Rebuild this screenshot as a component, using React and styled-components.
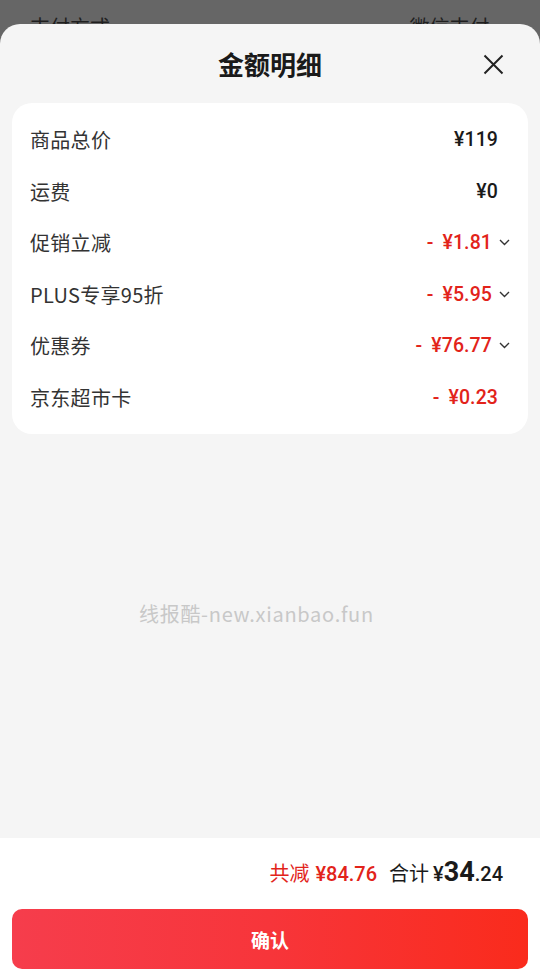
import React from 'react';
import styled, { createGlobalStyle } from 'styled-components';

const GlobalStyle = createGlobalStyle`
  html, body {
    margin: 0;
    padding: 0;
    background: #666666;
  }
  body {
    font-family: "Noto Sans CJK SC", "Noto Sans", sans-serif;
  }
  * { box-sizing: border-box; }
`;

const Page = styled.div`
  width: 540px;
  height: 980px;
  display: flex;
  flex-direction: column;
  background: #666666;
  overflow: hidden;
`;

const Backdrop = styled.div`
  height: 24px;
  overflow: hidden;
  display: flex;
  justify-content: space-between;
  padding: 15px 40px 0 30px;
  font-size: 20px;
  line-height: 24px;
  color: #1f1f1f;
`;

const Sheet = styled.div`
  flex: 1;
  display: flex;
  flex-direction: column;
  background: #f5f5f5;
  border-radius: 20px 20px 0 0;
  overflow: hidden;
`;

const Header = styled.div`
  position: relative;
  height: 79px;
  display: flex;
  align-items: center;
  justify-content: center;
`;

const Title = styled.h1`
  margin: 0;
  font-size: 26px;
  font-weight: 700;
  color: #1a1a1a;
  line-height: 1;
`;

const CloseButton = styled.button`
  position: absolute;
  right: 36px;
  top: 29px;
  width: 22px;
  height: 22px;
  padding: 0;
  border: none;
  background: transparent;
  display: flex;
  align-items: center;
  justify-content: center;
  cursor: pointer;
`;

const Card = styled.div`
  margin: 0 12px;
  padding: 11px 18px 11px;
  background: #ffffff;
  border-radius: 20px;
`;

const Row = styled.div`
  height: 51.5px;
  display: flex;
  align-items: center;
  justify-content: space-between;
`;

const Label = styled.span`
  font-size: 20px;
  color: #333333;
  letter-spacing: 0.3px;
`;

const Right = styled.div`
  display: flex;
  align-items: center;
`;

const Value = styled.span`
  font-family: Roboto, "Noto Sans CJK SC", sans-serif;
  font-size: 19.5px;
  font-weight: 500;
  color: ${p => (p.$red ? '#e2231a' : '#1a1a1a')};
  letter-spacing: 0.1px;
`;

const Minus = styled.span`
  margin-right: 9px;
`;

const Trail = styled.span`
  width: 12px;
  margin-left: ${p => (p.$icon ? '6px' : '0')};
  display: flex;
  align-items: center;
  justify-content: flex-end;
`;

const Filler = styled.div`
  flex: 1;
  padding: 168px 0 0 139px;
`;

const Watermark = styled.span`
  font-size: 20px;
  line-height: 24px;
  letter-spacing: 0.7px;
  color: #c8c8c8;
`;

const Footer = styled.div`
  background: #ffffff;
  display: flex;
  flex-direction: column;
`;

const Summary = styled.div`
  height: 65px;
  display: flex;
  align-items: center;
  justify-content: flex-end;
  padding: 3px 37px 0 0;
  gap: 12px;
`;

const Saved = styled.span`
  font-size: 20px;
  color: #e2231a;
  display: flex;
  align-items: baseline;
`;

const Total = styled.span`
  font-size: 20px;
  color: #1a1a1a;
  display: flex;
  align-items: baseline;
`;

const Num = styled.span`
  font-family: Roboto, "Noto Sans CJK SC", sans-serif;
  font-weight: ${p => (p.$bold ? 700 : 500)};
  font-size: ${p => p.$size || 20}px;
  margin-left: ${p => p.$gap || 0}px;
`;

const ConfirmButton = styled.button`
  margin: 6px 12px 11px;
  height: 60px;
  border: none;
  border-radius: 10px;
  background: linear-gradient(90deg, #f63d4c 0%, #f7353a 50%, #fa2b1c 100%);
  color: #ffffff;
  font-family: "Noto Sans CJK SC", sans-serif;
  font-size: 19px;
  font-weight: 700;
  cursor: pointer;
`;

const Chevron = () => (
  <svg width="11" height="7" viewBox="0 0 11 7">
    <polyline points="1,1 5.5,5.5 10,1" fill="none" stroke="#333" strokeWidth="1.4" />
  </svg>
);

const items = [
  { label: '商品总价', value: '¥119' },
  { label: '运费', value: '¥0' },
  { label: '促销立减', value: '¥1.81', red: true, more: true },
  { label: 'PLUS专享95折', value: '¥5.95', red: true, more: true },
  { label: '优惠券', value: '¥76.77', red: true, more: true },
  { label: '京东超市卡', value: '¥0.23', red: true },
];

export default function App() {
  return (
    <Page>
      <GlobalStyle />
      <Backdrop>
        <span>支付方式</span>
        <span>微信支付 ›</span>
      </Backdrop>
      <Sheet>
        <Header>
          <Title>金额明细</Title>
          <CloseButton aria-label="关闭">
            <svg width="21" height="21" viewBox="0 0 21 21">
              <path d="M1.5 1.5 L19.5 19.5 M19.5 1.5 L1.5 19.5" stroke="#222" strokeWidth="2" fill="none" />
            </svg>
          </CloseButton>
        </Header>
        <Card>
          {items.map(it => (
            <Row key={it.label}>
              <Label>{it.label}</Label>
              <Right>
                <Value $red={it.red}>
                  {it.red && <Minus>-</Minus>}
                  {it.value}
                </Value>
                <Trail $icon={it.more}>{it.more && <Chevron />}</Trail>
              </Right>
            </Row>
          ))}
        </Card>
        <Filler>
          <Watermark>线报酷-new.xianbao.fun</Watermark>
        </Filler>
        <Footer>
          <Summary>
            <Saved>
              共减<Num $gap={6}>¥84.76</Num>
            </Saved>
            <Total>
              合计<Num $gap={4}>¥</Num>
              <Num $bold $size={27}>34</Num>
              <Num>.24</Num>
            </Total>
          </Summary>
          <ConfirmButton>确认</ConfirmButton>
        </Footer>
      </Sheet>
    </Page>
  );
}
